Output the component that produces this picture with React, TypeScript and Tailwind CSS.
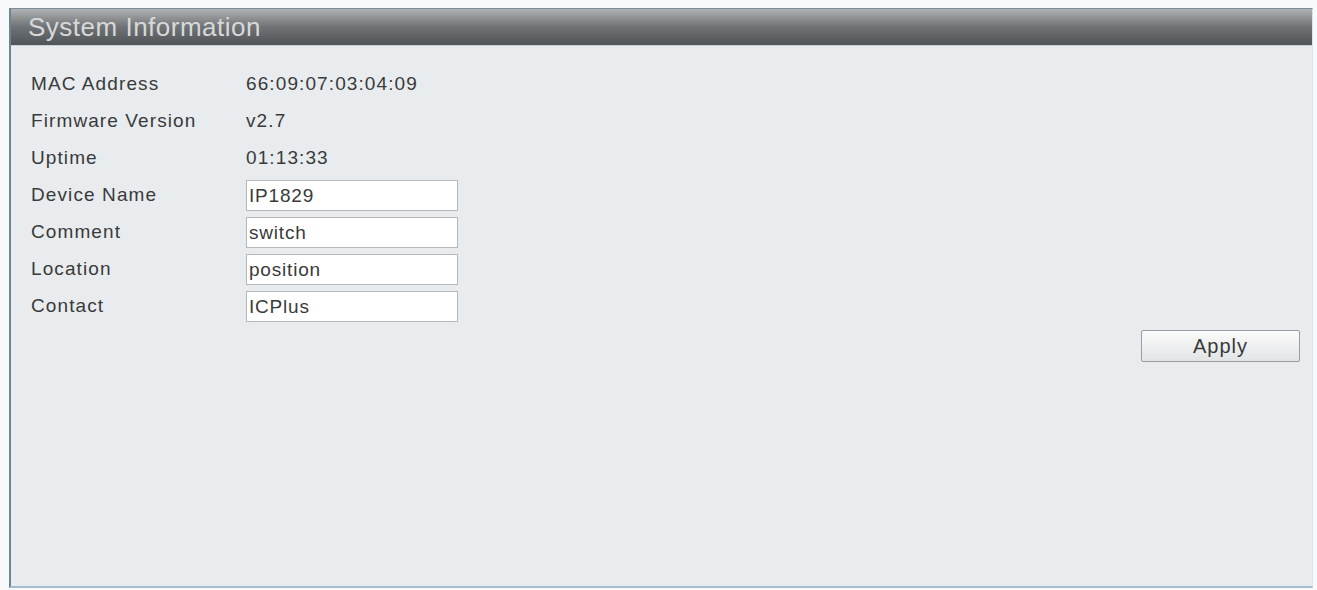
import React from "react";

const font = { fontFamily: '"Liberation Sans", Arial, sans-serif' };

const infoRows = [
  ["MAC Address", "66:09:07:03:04:09"],
  ["Firmware Version", "v2.7"],
  ["Uptime", "01:13:33"],
];

const inputRows = [
  ["Device Name", "IP1829"],
  ["Comment", "switch"],
  ["Location", "position"],
  ["Contact", "ICPlus"],
];

export default function App() {
  return (
    <div className="w-[1317px] h-[590px] bg-[#f7f9fa] pl-[9px] pt-[8px] pr-[4px] pb-[2px]" style={font}>
      <div className="flex h-full flex-col border-l-2 border-t border-b-2 border-r border-l-[#6f858e] border-t-[#7a8f98] border-b-[#a9bccb] border-r-[#d9e2ea] bg-[#e8ecee]">
        <div className="flex h-[37px] items-center border-b border-[#c9d2d6] bg-gradient-to-b from-[#b0b2b3] via-[#707375] to-[#4f5456] pl-[17px]">
          <span className="text-[26px] leading-none tracking-[0.5px] text-[#d6d9da]">System Information</span>
        </div>
        <div className="flex flex-col pl-[20px] pr-[12px] pt-[20px]">
          {infoRows.map(([label, value]) => (
            <div key={label} className="flex h-[37px] items-center text-[19px] tracking-[1.1px] text-[#3a3a3a]">
              <span className="w-[215px]">{label}</span>
              <span>{value}</span>
            </div>
          ))}
          {inputRows.map(([label, value]) => (
            <div key={label} className="flex h-[37px] items-center text-[19px] tracking-[1.1px] text-[#3a3a3a]">
              <span className="w-[215px]">{label}</span>
              <input
                readOnly
                value={value}
                className="h-[31px] w-[212px] border border-[#b5b9bb] bg-white px-[2px] text-[19px] tracking-[0.8px] text-[#3a3a3a] outline-none"
                style={font}
              />
            </div>
          ))}
          <div className="mt-[5px] flex justify-end">
            <button
              className="h-[32px] w-[159px] rounded-[2px] border border-[#9a9d9f] bg-gradient-to-b from-[#fbfbfb] to-[#e2e4e5] text-[20px] tracking-[1px] text-[#3a3a3a]"
              style={font}
            >
              Apply
            </button>
          </div>
        </div>
      </div>
    </div>
  );
}
